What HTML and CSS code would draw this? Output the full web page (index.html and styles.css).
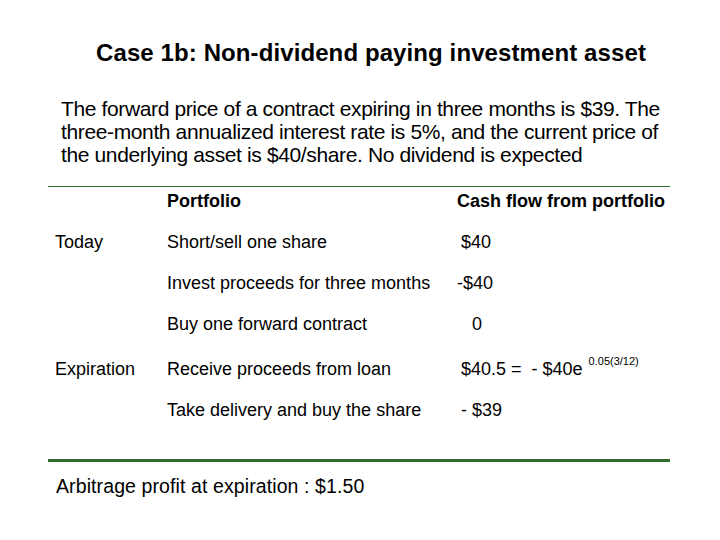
FILE: index.html
```html
<!DOCTYPE html>
<html>
<head>
<meta charset="utf-8">
<link rel="stylesheet" href="styles.css">
</head>
<body>
<div class="slide">
  <h1 class="title">Case 1b: Non-dividend paying investment asset</h1>
  <p class="intro">The forward price of a contract expiring in three months is $39. The three-month annualized interest rate is 5%, and the current price of the underlying asset is $40/share. No dividend is expected</p>
  <div class="rule thin"></div>
  <div class="grid">
    <div class="row head">
      <div class="c1"></div>
      <div class="c2">Portfolio</div>
      <div class="c3">Cash flow from portfolio</div>
    </div>
    <div class="row first">
      <div class="c1">Today</div>
      <div class="c2">Short/sell one share</div>
      <div class="c3 in1">$40</div>
    </div>
    <div class="row">
      <div class="c1"></div>
      <div class="c2">Invest proceeds for three months</div>
      <div class="c3">-$40</div>
    </div>
    <div class="row">
      <div class="c1"></div>
      <div class="c2">Buy one forward contract</div>
      <div class="c3 in3">0</div>
    </div>
    <div class="row exp">
      <div class="c1">Expiration</div>
      <div class="c2">Receive proceeds from loan</div>
      <div class="c3 in1">$40.5 =&nbsp; - $40e<span class="power">0.05(3/12)</span></div>
    </div>
    <div class="row">
      <div class="c1"></div>
      <div class="c2">Take delivery and buy the share</div>
      <div class="c3 in1">- $39</div>
    </div>
  </div>
  <div class="rule thick"></div>
  <p class="profit">Arbitrage profit at expiration : $1.50</p>
</div>
</body>
</html>
```
FILE: styles.css
```css
html, body {
  margin: 0;
  padding: 0;
  background: #ffffff;
}
body {
  width: 720px;
  height: 540px;
  overflow: hidden;
  font-family: "Liberation Sans", Arial, sans-serif;
  color: #000;
}
.slide {
  padding-top: 39px;
}
.title {
  margin: 0;
  font-size: 24px;
  font-weight: bold;
  line-height: 28px;
  text-align: center;
  padding-left: 22px;
  letter-spacing: 0.1px;
}
.intro {
  margin: 30px 0 0 61px;
  width: 608px;
  font-size: 21px;
  line-height: 23px;
  letter-spacing: -0.37px;
}
.rule {
  margin-left: 48px;
  width: 622px;
  background: #2f6b2f;
}
.rule.thin {
  height: 1px;
  margin-top: 20px;
}
.rule.thick {
  height: 3px;
  margin-top: 29px;
}
.grid {
  display: flex;
  flex-direction: column;
}
.row {
  display: flex;
  align-items: center;
  height: 41px;
  font-size: 18px;
  line-height: 22px;
}
.row.head {
  height: 28px;
  font-weight: bold;
}
.row.first {
  margin-top: 6px;
}
.row.exp {
  margin-top: 4px;
}
.c1 {
  width: 112px;
  padding-left: 55px;
}
.c2 {
  width: 290px;
}
.c3 {
  white-space: nowrap;
}
.in1 { padding-left: 4px; }
.in3 { padding-left: 15px; }
.power {
  display: inline-block;
  font-size: 11px;
  margin-left: 6px;
  position: relative;
  top: -9px;
  line-height: 12px;
  vertical-align: middle;
}
.profit {
  margin: 13px 0 0 56px;
  font-size: 19.5px;
  line-height: 22px;
  letter-spacing: 0.1px;
}
```
